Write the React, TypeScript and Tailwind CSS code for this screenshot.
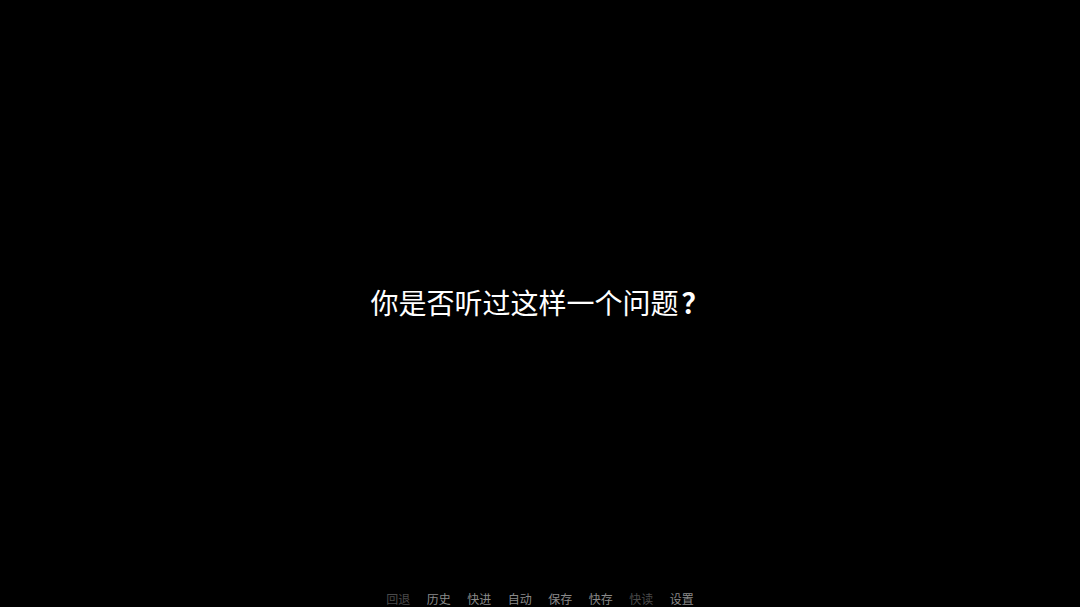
const menu = [
  { label: '回退', dim: true },
  { label: '历史', dim: false },
  { label: '快进', dim: false },
  { label: '自动', dim: false },
  { label: '保存', dim: false },
  { label: '快存', dim: false },
  { label: '快读', dim: true },
  { label: '设置', dim: false },
];

export default function App() {
  return (
    <div
      className="flex h-screen w-full flex-col overflow-hidden bg-black"
      style={{ fontFamily: '"Noto Sans CJK SC", "Noto Sans", sans-serif' }}
    >
      {/* Dialogue line */}
      <div className="flex flex-1 items-center justify-center pt-[12px]">
        <p className="text-[28px] leading-[34px] text-white">
          你是否听过这样一个问题<span className="ml-[3px] font-bold">？</span>
        </p>
      </div>

      {/* Quick menu */}
      <div className="flex items-center justify-center gap-[16.5px] pb-[2px]">
        {menu.map((item) => (
          <span
            key={item.label}
            className={
              item.dim
                ? 'text-[12px] leading-[13px] text-[#4a4a4a]'
                : 'text-[12px] leading-[13px] text-[#8a8a8a]'
            }
          >
            {item.label}
          </span>
        ))}
      </div>
    </div>
  );
}
